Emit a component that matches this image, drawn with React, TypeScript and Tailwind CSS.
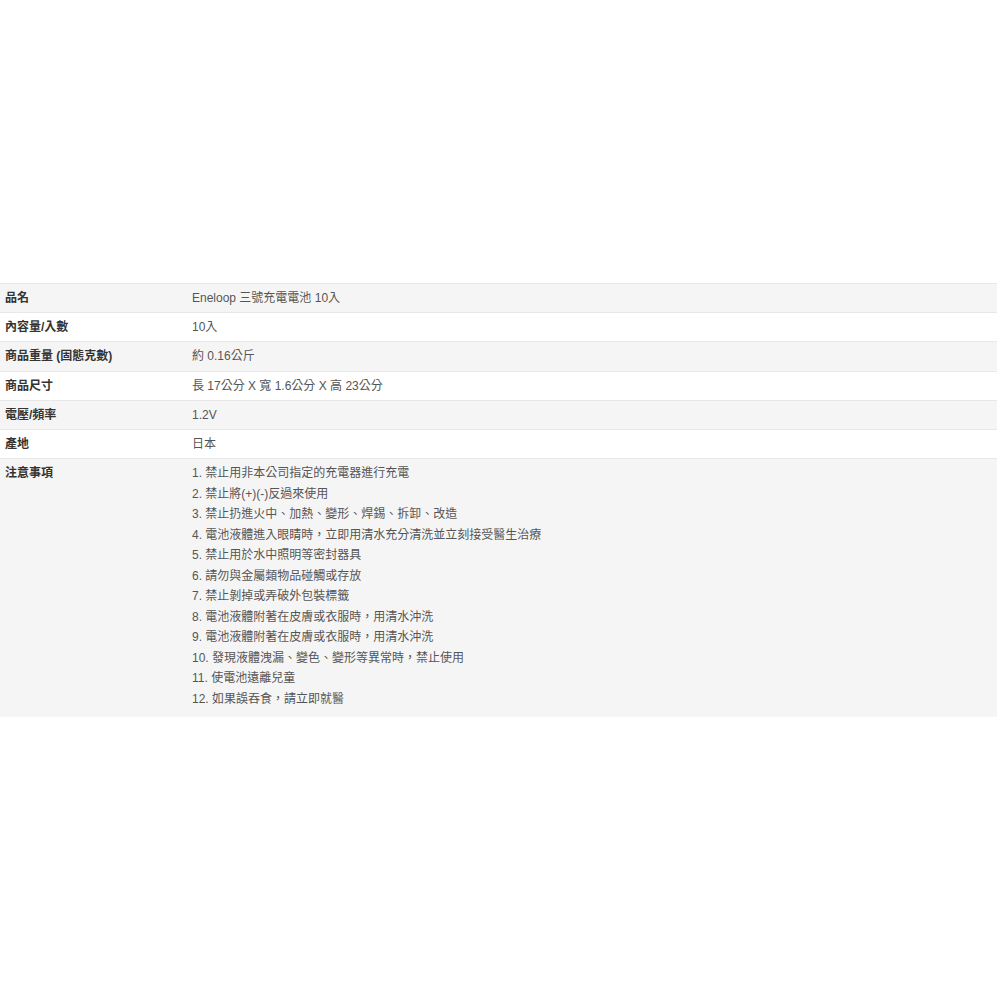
import React from 'react';

const rows: { label: string; value: React.ReactNode }[] = [
  { label: '品名', value: 'Eneloop 三號充電電池 10入' },
  { label: '內容量/入數', value: '10入' },
  { label: '商品重量 (固態克數)', value: '約 0.16公斤' },
  { label: '商品尺寸', value: '長 17公分 X 寬 1.6公分 X 高 23公分' },
  { label: '電壓/頻率', value: '1.2V' },
  { label: '產地', value: '日本' },
];

const notes = [
  '1. 禁止用非本公司指定的充電器進行充電',
  '2. 禁止將(+)(-)反過來使用',
  '3. 禁止扔進火中、加熱、變形、焊錫、拆卸、改造',
  '4. 電池液體進入眼睛時，立即用清水充分清洗並立刻接受醫生治療',
  '5. 禁止用於水中照明等密封器具',
  '6. 請勿與金屬類物品碰觸或存放',
  '7. 禁止剝掉或弄破外包裝標籤',
  '8. 電池液體附著在皮膚或衣服時，用清水沖洗',
  '9. 電池液體附著在皮膚或衣服時，用清水沖洗',
  '10. 發現液體洩漏、變色、變形等異常時，禁止使用',
  '11. 使電池遠離兒童',
  '12. 如果誤吞食，請立即就醫',
];

export default function App() {
  const all = [
    ...rows,
    {
      label: '注意事項',
      value: (
        <div className="leading-[20.5px] -mt-[1px] pb-[3px]">
          {notes.map((n) => (
            <div key={n}>{n}</div>
          ))}
        </div>
      ),
    },
  ];

  return (
    <div className="min-h-screen bg-white pt-[283px] font-['Liberation_Sans','Noto_Sans_CJK_TC',sans-serif] text-[12px]">
      <table className="w-[997px] border-collapse">
        <tbody>
          {all.map((r, i) => (
            <tr key={r.label} className={i % 2 === 0 ? 'bg-[#f5f5f5]' : 'bg-white'}>
              <th className="w-[187px] border-t border-[#e8e8e8] px-[5px] py-[5px] text-left align-top font-bold leading-[18.2px] text-[#333]">
                {r.label}
              </th>
              <td className="border-t border-[#e8e8e8] px-[5px] py-[5px] align-top leading-[18.2px] text-[#555]">
                {r.value}
              </td>
            </tr>
          ))}
        </tbody>
      </table>
    </div>
  );
}
